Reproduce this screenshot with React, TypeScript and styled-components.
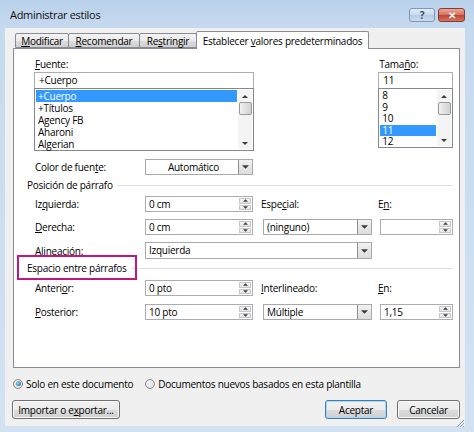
import styled, { createGlobalStyle, css } from "styled-components";
import type { ReactNode } from "react";

const FONT = `"Open Sans", "Noto Sans", sans-serif`;

const GlobalStyle = createGlobalStyle`
  html, body { margin: 0; padding: 0; background: #cfe0f2; }
  body { font-family: ${FONT}; font-size: 10px; letter-spacing: -0.25px; color: #000; }
  * { box-sizing: border-box; }
`;

const fontList = ["+Cuerpo", "+Títulos", "Agency FB", "Aharoni", "Algerian"];
const sizeList = ["8", "9", "10", "11", "12"];

const Arrow = ({ dir, size = 7 }: { dir: "up" | "down"; size?: number }) => (
  <svg width={size} height={Math.ceil(size / 2)} viewBox="0 0 8 4">
    <path d={dir === "up" ? "M0 4 L4 0 L8 4Z" : "M0 0 L4 4 L8 0Z"} fill="#3c3c3c" />
  </svg>
);

const Window = styled.div`
  position: relative;
  width: 474px;
  height: 432px;
  display: flex;
  flex-direction: column;
  padding: 0 9px 6px 5px;
  background: linear-gradient(#b9d1ea, #c6daef 30px, #d2e2f3);
  overflow: hidden;
`;

const TitleBar = styled.div`
  height: 28px;
  display: flex;
  justify-content: space-between;
  align-items: flex-start;
`;

const Title = styled.div`
  font-size: 11px;
  letter-spacing: -0.3px;
  padding: 7px 0 0 5px;
  color: #111;
`;

const CaptionButtons = styled.div`
  display: flex;
  gap: 3px;
  padding-top: 8px;
`;

const CaptionButton = styled.div<{ $close?: boolean }>`
  width: ${(p) => (p.$close ? 27 : 26)}px;
  height: 14px;
  border-radius: 3px;
  display: flex;
  align-items: center;
  justify-content: center;
  font-size: 10px;
  font-weight: 700;
  line-height: 1;
  ${(p) =>
    p.$close
      ? css`
          background: linear-gradient(#e9a99b, #d2705e 50%, #c1422f 51%, #d27462);
          border: 1px solid #8a3b33;
          color: #fff;
        `
      : css`
          background: linear-gradient(#e0eaf5, #c9d9eb 50%, #b6cbe3 51%, #c9dbee);
          border: 1px solid #7f97b6;
          color: #3f4f66;
        `}
`;

const Body = styled.div`
  flex: 1;
  display: flex;
  flex-direction: column;
  background: #f0f0f0;
  padding: 3px 5px 0 8px;
`;

const TabStrip = styled.div`
  display: flex;
  align-items: flex-end;
  height: 17px;
  padding-left: 2px;
  position: relative;
  z-index: 1;
`;

const Tab = styled.div<{ $w: number; $active?: boolean }>`
  width: ${(p) => p.$w}px;
  height: ${(p) => (p.$active ? 18 : 15)}px;
  margin-bottom: ${(p) => (p.$active ? -1 : 0)}px;
  display: flex;
  align-items: center;
  justify-content: center;
  border: 1px solid #898c95;
  border-bottom: ${(p) => (p.$active ? "none" : "1px solid #898c95")};
  border-radius: 2px 2px 0 0;
  background: ${(p) => (p.$active ? "#fff" : "linear-gradient(#f3f3f3, #ebebeb 50%, #dddddd 51%, #cfcfcf)")};
  & + & {
    margin-left: -1px;
  }
`;

const U = styled.span`
  text-decoration: underline;
  text-underline-offset: 1px;
`;

const Panel = styled.div`
  height: 320px;
  background: #fff;
  border: 1px solid #898c95;
  padding: 8px 6px 0 20px;
`;

const FontRow = styled.div`
  display: flex;
  gap: 124px;
`;

const FieldColumn = styled.div<{ $w: number }>`
  width: ${(p) => p.$w}px;
  display: flex;
  flex-direction: column;
`;

const FieldLabel = styled.div`
  height: 15px;
  line-height: 14px;
  padding-left: 1px;
`;

const TextBox = styled.div`
  height: 16px;
  border: 1px solid #abadb3;
  border-bottom: none;
  padding-left: 4px;
  line-height: 14px;
  background: #fff;
`;

const ListBox = styled.div<{ $h: number }>`
  height: ${(p) => p.$h}px;
  border: 1px solid #828790;
  display: flex;
  padding: 1px;
`;

const ListItems = styled.div<{ $lh: number }>`
  flex: 1;
  line-height: ${(p) => p.$lh}px;
`;

const ListItem = styled.div<{ $selected?: boolean }>`
  padding-left: 2px;
  background: ${(p) => (p.$selected ? "#3399ff" : "transparent")};
  color: ${(p) => (p.$selected ? "#fff" : "#000")};
  margin-right: 1px;
`;

const ScrollBar = styled.div`
  width: 14px;
  display: flex;
  flex-direction: column;
  align-items: center;
  background: #f4f4f4;
  padding: 5px 0 4px;
`;

const ScrollThumb = styled.div<{ $top: number }>`
  width: 13px;
  height: 13px;
  margin-top: ${(p) => p.$top}px;
  border: 1px solid #9a9a9a;
  border-radius: 2px;
  background: linear-gradient(90deg, #f2f2f2, #e0e0e0 50%, #d2d2d2);
`;

const Spacer = styled.div`
  flex: 1;
`;

const GridRow = styled.div<{ $mt: number; $h?: number }>`
  display: grid;
  grid-template-columns: 111px 118px 117px 73px;
  align-items: center;
  margin-top: ${(p) => p.$mt}px;
  height: ${(p) => p.$h ?? 16}px;
`;

const RowLabel = styled.div`
  padding-left: 1px;
`;

const SideLabel = styled.div`
  margin-left: -2px;
`;

const SpinBox = styled.div<{ $w: number }>`
  width: ${(p) => p.$w}px;
  height: 16px;
  display: flex;
  border: 1px solid #abadb3;
  background: #fff;
`;

const SpinValue = styled.div`
  flex: 1;
  padding-left: 3px;
  line-height: 14px;
`;

const SpinButtons = styled.div`
  width: 13px;
  display: flex;
  flex-direction: column;
  gap: 1px;
  padding: 1px 1px 1px 0;
`;

const SpinHalf = styled.div`
  flex: 1;
  display: flex;
  align-items: center;
  justify-content: center;
  border: 1px solid #c8c8c8;
  background: linear-gradient(#f5f5f5, #e4e4e4);
`;

const Dropdown = styled.div<{ $w: number; $span?: boolean }>`
  width: ${(p) => p.$w}px;
  height: ${(p) => (p.$span ? 17 : 16)}px;
  display: flex;
  border: 1px solid #a9a9a9;
  background: #fff;
  ${(p) =>
    p.$span &&
    css`
      grid-column: 2 / span 2;
    `}
`;

const DropValue = styled.div<{ $center?: boolean }>`
  flex: 1;
  line-height: 14px;
  padding-left: 3px;
  text-align: ${(p) => (p.$center ? "center" : "left")};
`;

const DropButton = styled.div`
  width: 14px;
  display: flex;
  align-items: center;
  justify-content: center;
  border-left: 1px solid #8e8f8f;
  background: linear-gradient(#f2f2f2, #dcdcdc);
`;

const GroupHeading = styled.div<{ $mt: number }>`
  display: flex;
  align-items: center;
  gap: 5px;
  height: 14px;
  margin: ${(p) => p.$mt}px 0 0 -7px;
  &::after {
    content: "";
    flex: 1;
    border-top: 1px solid #dcdfe3;
  }
`;

const HeadingText = styled.span<{ $marked?: boolean }>`
  position: relative;
  ${(p) =>
    p.$marked &&
    css`
      &::before {
        content: "";
        position: absolute;
        inset: -6px -10px -5px -10px;
        border: 2px solid #c0177f;
      }
    `}
`;

const RadioRow = styled.div`
  display: flex;
  align-items: center;
  height: 13px;
  margin-top: 9px;
  gap: 12px;
`;

const RadioOption = styled.div`
  display: flex;
  align-items: center;
  gap: 3px;
`;

const RadioCircle = styled.span`
  width: 10px;
  height: 10px;
  border-radius: 50%;
  border: 1px solid #8b8b8b;
  background: radial-gradient(circle at 40% 40%, #f7f7f7, #d4d4d4);
  display: flex;
  align-items: center;
  justify-content: center;
`;

const RadioDot = styled.span`
  width: 5px;
  height: 5px;
  border-radius: 50%;
  background: radial-gradient(circle at 35% 35%, #97d7f5, #1b5f90);
`;

const ButtonRow = styled.div`
  display: flex;
  margin-top: 10px;
  gap: 10px;
`;

const Button = styled.div<{ $w: number; $default?: boolean }>`
  width: ${(p) => p.$w}px;
  height: 19px;
  display: flex;
  align-items: center;
  justify-content: center;
  border-radius: 3px;
  border: 1px solid ${(p) => (p.$default ? "#3c7fb1" : "#707070")};
  background: linear-gradient(#f2f2f2, #ebebeb 50%, #dddddd 51%, #cfcfcf);
  box-shadow: ${(p) => (p.$default ? "inset 0 0 0 1px #a8d8f5" : "inset 0 0 0 1px #fbfbfb")};
  &:first-child {
    margin-left: -1px;
  }
`;

const Grip = styled.svg`
  position: absolute;
  right: 9px;
  bottom: 4px;
`;

const Spinner = ({ value, w }: { value: string; w: number }) => (
  <SpinBox $w={w}>
    <SpinValue>{value}</SpinValue>
    <SpinButtons>
      <SpinHalf>
        <Arrow dir="up" size={5} />
      </SpinHalf>
      <SpinHalf>
        <Arrow dir="down" size={5} />
      </SpinHalf>
    </SpinButtons>
  </SpinBox>
);

const Select = ({ value, w, span, center }: { value: string; w: number; span?: boolean; center?: boolean }) => (
  <Dropdown $w={w} $span={span}>
    <DropValue $center={center}>{value}</DropValue>
    <DropButton>
      <Arrow dir="down" size={7} />
    </DropButton>
  </Dropdown>
);

const List = ({ items, selected, h, lh, thumbTop }: { items: string[]; selected: number; h: number; lh: number; thumbTop: number }) => (
  <ListBox $h={h}>
    <ListItems $lh={lh}>
      {items.map((item, i) => (
        <ListItem key={item} $selected={i === selected}>
          {item}
        </ListItem>
      ))}
    </ListItems>
    <ScrollBar>
      <Arrow dir="up" size={6} />
      <ScrollThumb $top={thumbTop} />
      <Spacer />
      <Arrow dir="down" size={6} />
    </ScrollBar>
  </ListBox>
);

const Label = ({ children }: { children: ReactNode }) => <RowLabel>{children}</RowLabel>;

export default function App() {
  return (
    <>
      <GlobalStyle />
      <Window>
        <TitleBar>
          <Title>Administrar estilos</Title>
          <CaptionButtons>
            <CaptionButton>?</CaptionButton>
            <CaptionButton $close>✕</CaptionButton>
          </CaptionButtons>
        </TitleBar>

        <Body>
          <TabStrip>
            <Tab $w={54}>
              <span>
                <U>M</U>odificar
              </span>
            </Tab>
            <Tab $w={72}>
              <span>
                <U>R</U>ecomendar
              </span>
            </Tab>
            <Tab $w={58}>
              <span>
                Re<U>s</U>tringir
              </span>
            </Tab>
            <Tab $w={173} $active>
              <span>
                Establecer <U>v</U>alores predeterminados
              </span>
            </Tab>
          </TabStrip>

          <Panel>
            <FontRow>
              <FieldColumn $w={221}>
                <FieldLabel>
                  <U>F</U>uente:
                </FieldLabel>
                <TextBox>+Cuerpo</TextBox>
                <List items={fontList} selected={0} h={63} lh={12} thumbTop={4} />
              </FieldColumn>
              <FieldColumn $w={75}>
                <FieldLabel>
                  Tama<U>ñ</U>o:
                </FieldLabel>
                <TextBox>11</TextBox>
                <List items={sizeList} selected={3} h={60} lh={11.5} thumbTop={4} />
              </FieldColumn>
            </FontRow>

            <GridRow $mt={8}>
              <Label>
                Color de fuen<U>t</U>e:
              </Label>
              <Select value="Automático" w={108} center />
            </GridRow>

            <GroupHeading $mt={3}>
              <HeadingText>Posición de párrafo</HeadingText>
            </GroupHeading>

            <GridRow $mt={4}>
              <Label>
                Iz<U>q</U>uierda:
              </Label>
              <Spinner value="0 cm" w={108} />
              <SideLabel>
                Espe<U>c</U>ial:
              </SideLabel>
              <SideLabel>
                E<U>n</U>:
              </SideLabel>
            </GridRow>

            <GridRow $mt={7}>
              <Label>
                <U>D</U>erecha:
              </Label>
              <Spinner value="0 cm" w={108} />
              <Select value="(ninguno)" w={109} />
              <Spinner value="" w={73} />
            </GridRow>

            <GridRow $mt={7} $h={17}>
              <Label>
                <U>A</U>lineación:
              </Label>
              <Select value="Izquierda" w={227} span />
            </GridRow>

            <GroupHeading $mt={2}>
              <HeadingText $marked>Espacio entre párrafos</HeadingText>
            </GroupHeading>

            <GridRow $mt={5}>
              <Label>
                Anteri<U>o</U>r:
              </Label>
              <Spinner value="0 pto" w={108} />
              <SideLabel>
                <U>I</U>nterlineado:
              </SideLabel>
              <SideLabel>
                <U>E</U>n:
              </SideLabel>
            </GridRow>

            <GridRow $mt={8}>
              <Label>
                <U>P</U>osterior:
              </Label>
              <Spinner value="10 pto" w={108} />
              <Select value="Múltiple" w={109} />
              <Spinner value="1,15" w={73} />
            </GridRow>
          </Panel>

          <RadioRow>
            <RadioOption>
              <RadioCircle>
                <RadioDot />
              </RadioCircle>
              Solo en este documento
            </RadioOption>
            <RadioOption>
              <RadioCircle />
              Documentos nuevos basados en esta plantilla
            </RadioOption>
          </RadioRow>

          <ButtonRow>
            <Button $w={108}>
              <span>
                Importar o e<U>x</U>portar...
              </span>
            </Button>
            <Spacer />
            <Button $w={62} $default>
              Aceptar
            </Button>
            <Button $w={63}>Cancelar</Button>
          </ButtonRow>
        </Body>

        <Grip width="9" height="9" viewBox="0 0 9 9">
          <path d="M8 1 L1 8 M8 4 L4 8 M8 7 L7 8" stroke="#8aa0b8" strokeWidth="1" />
        </Grip>
      </Window>
    </>
  );
}
